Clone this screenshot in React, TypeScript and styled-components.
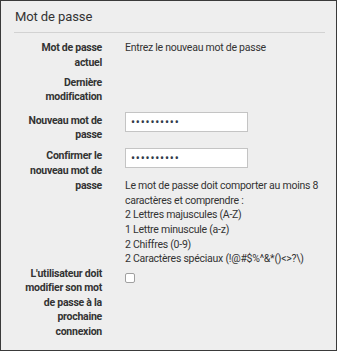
import styled, { createGlobalStyle } from "styled-components";

const Global = createGlobalStyle`
  body {
    margin: 0;
    background: #eeeeee;
  }
`;

const Panel = styled.section`
  box-sizing: border-box;
  width: 337px;
  height: 351px;
  border: 1px solid #3a3a3a;
  background: #eeeeee;
  padding: 8px 11px 0 13px;
  font-family: Roboto, "Liberation Sans", sans-serif;
  color: #333;
`;

const Title = styled.h2`
  margin: 0;
  font-size: 13px;
  font-weight: 400;
  line-height: 16px;
  padding: 0 0 7px 1px;
  border-bottom: 1px solid #d2d2d2;
  letter-spacing: -0.1px;
`;

const Form = styled.div`
  display: flex;
  flex-direction: column;
  margin-top: 8px;
  font-size: 10.5px;
  line-height: 14.6px;
  letter-spacing: -0.25px;
`;

const Field = styled.div<{ $space?: number }>`
  display: grid;
  grid-template-columns: 88px 1fr;
  column-gap: 23px;
  margin-top: ${(p) => p.$space ?? 0}px;
`;

const Label = styled.div<{ $offset?: number }>`
  text-align: right;
  font-weight: 700;
  padding-top: ${(p) => p.$offset ?? 0}px;
`;

const Value = styled.div`
  display: flex;
  flex-direction: column;
  align-items: flex-start;
`;

const PasswordInput = styled.input`
  box-sizing: border-box;
  width: 123px;
  height: 20px;
  margin: 0;
  padding: 0 5px;
  border: 1px solid #c4c4c4;
  background: #fff;
  color: #2f3a4a;
  font-family: Roboto, sans-serif;
  font-size: 12px;
  letter-spacing: 0.8px;
  outline: none;
`;

const Hint = styled.div`
  margin-top: 11.4px;
`;

const Check = styled.input`
  appearance: none;
  box-sizing: border-box;
  width: 10px;
  height: 10px;
  margin: 6px 0 0;
  border: 1px solid #a0a0a0;
  border-radius: 2px;
  background: #fff;
`;

export default function App() {
  return (
    <>
      <Global />
      <Panel>
        <Title>Mot de passe</Title>
        <Form>
          <Field>
            <Label>Mot de passe actuel</Label>
            <Value>Entrez le nouveau mot de passe</Value>
          </Field>
          <Field $space={5.5}>
            <Label>Dernière modification</Label>
            <Value />
          </Field>
          <Field $space={7}>
            <Label $offset={1.7}>Nouveau mot de passe</Label>
            <Value>
              <PasswordInput type="password" defaultValue="abcdefghij" />
            </Value>
          </Field>
          <Field $space={5}>
            <Label $offset={1.7}>Confirmer le nouveau mot de passe</Label>
            <Value>
              <PasswordInput type="password" defaultValue="abcdefghij" />
              <Hint>
                Le mot de passe doit comporter au moins 8 caractères et
                comprendre :
                <br />2 Lettres majuscules (A-Z)
                <br />1 Lettre minuscule (a-z)
                <br />2 Chiffres (0-9)
                <br />2 Caractères spéciaux (!@#$%^&amp;*()&lt;&gt;?\)
              </Hint>
            </Value>
          </Field>
          <Field>
            <Label>L'utilisateur doit modifier son mot de passe à la prochaine connexion</Label>
            <Value>
              <Check type="checkbox" />
            </Value>
          </Field>
        </Form>
      </Panel>
    </>
  );
}
